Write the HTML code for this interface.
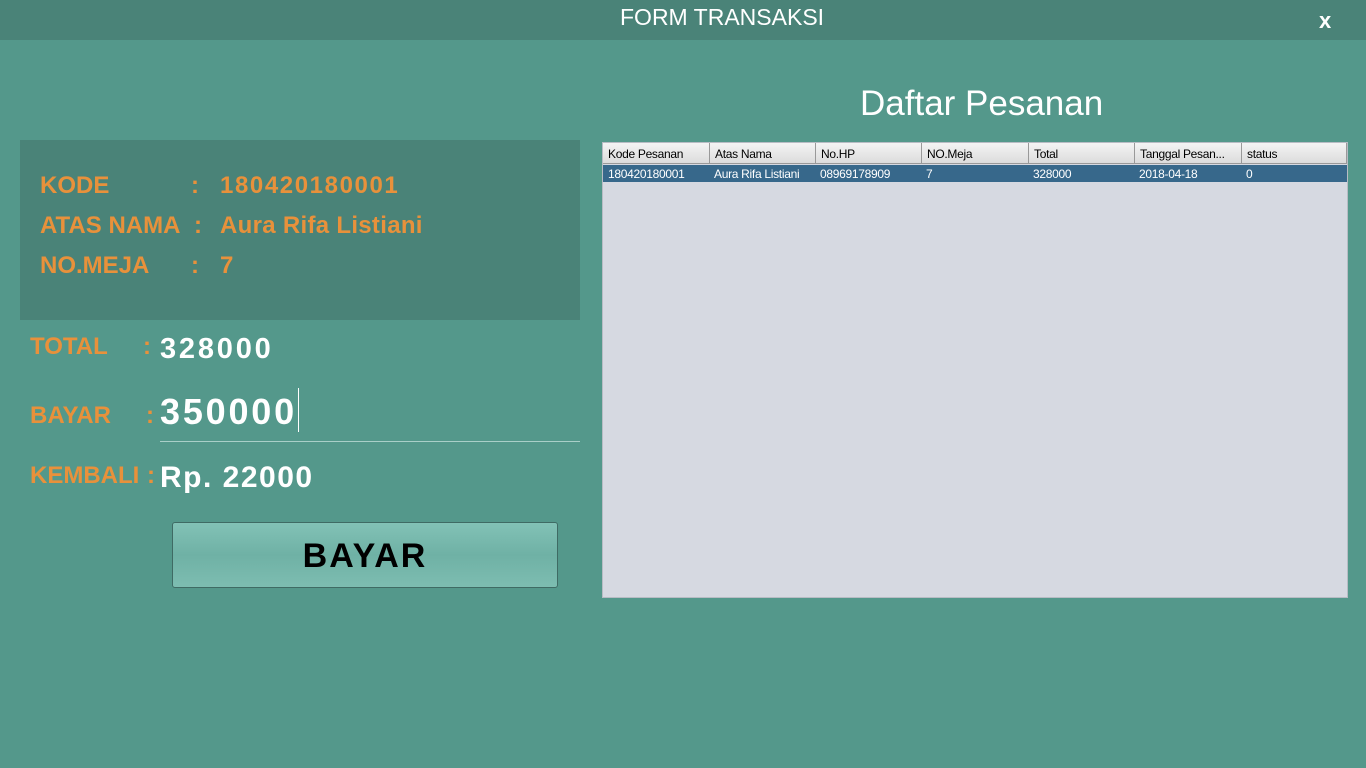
<!DOCTYPE html>
<html><head><meta charset="utf-8"><style>
*{margin:0;padding:0;box-sizing:border-box}
body{width:1366px;height:768px;background:#54988b;position:relative;overflow:hidden;font-family:"Liberation Sans",sans-serif}
.hdr{position:absolute;left:0;top:0;width:1366px;height:40px;background:#4a8378}
.t{position:absolute;white-space:nowrap}
.or{color:#e8913b;font-weight:bold;font-size:24px}
.wh{color:#fff;font-weight:bold}
.panel{position:absolute;left:20px;top:140px;width:560px;height:180px;background:#4a8378}
.tbl{position:absolute;left:602px;top:142px;width:746px;height:456px;background:#d6d9e1;border:1px solid #b8bcc4}
.th{position:absolute;top:0;height:21px;background:linear-gradient(#f4f4f4,#dcdcdc);border-right:1px solid #999;border-bottom:1px solid #999;font-size:12px;color:#000;padding:4px 0 0 5px;letter-spacing:-0.3px}
.row{position:absolute;left:0;top:22px;width:744px;height:17px;background:#37688b}
.td{position:absolute;top:2px;font-size:12px;color:#fff;letter-spacing:-0.3px}
.btn{position:absolute;left:172px;top:522px;width:386px;height:66px;border:1px solid #3f6b64;border-radius:3px;background:linear-gradient(#82c2b6,#6fb1a5 50%,#7dbdb1);text-align:center;font-size:34px;font-weight:bold;letter-spacing:2px;line-height:66px;color:#000}
</style></head><body>
<div class="hdr"></div>
<div class="t" style="left:620px;top:4px;color:#fff;font-size:23px">FORM TRANSAKSI</div>
<div class="t wh" style="left:1319px;top:8px;font-size:22px">x</div>
<div class="t" style="left:860px;top:84px;color:#fff;font-size:35px">Daftar Pesanan</div>
<div class="panel"></div>
<div class="t or" style="left:40px;top:172px">KODE</div>
<div class="t or" style="left:191px;top:172px">:</div>
<div class="t or" style="left:220px;top:172px;letter-spacing:1.6px">180420180001</div>
<div class="t or" style="left:40px;top:212px">ATAS NAMA</div>
<div class="t or" style="left:194px;top:212px">:</div>
<div class="t or" style="left:220px;top:212px;letter-spacing:0.3px">Aura Rifa Listiani</div>
<div class="t or" style="left:40px;top:252px">NO.MEJA</div>
<div class="t or" style="left:191px;top:252px">:</div>
<div class="t or" style="left:220px;top:252px">7</div>
<div class="t or" style="left:30px;top:333px">TOTAL</div>
<div class="t or" style="left:143px;top:333px">:</div>
<div class="t wh" style="left:160px;top:333px;font-size:29px;letter-spacing:2.8px">328000</div>
<div class="t or" style="left:30px;top:402px">BAYAR</div>
<div class="t or" style="left:146px;top:402px">:</div>
<div class="t wh" style="left:160px;top:391px;font-size:36px;letter-spacing:2.8px">350000</div>
<div style="position:absolute;left:298px;top:388px;width:1px;height:44px;background:#fff"></div>
<div style="position:absolute;left:160px;top:441px;width:420px;height:1px;background:#a9cfc8"></div>
<div class="t or" style="left:30px;top:462px">KEMBALI</div>
<div class="t or" style="left:147px;top:462px">:</div>
<div class="t wh" style="left:160px;top:461px;font-size:30px;letter-spacing:1.5px">Rp. 22000</div>
<div class="btn">BAYAR</div>
<div class="tbl">
<div class="th" style="left:0;width:107px">Kode Pesanan</div>
<div class="th" style="left:107px;width:106px">Atas Nama</div>
<div class="th" style="left:213px;width:106px">No.HP</div>
<div class="th" style="left:319px;width:107px">NO.Meja</div>
<div class="th" style="left:426px;width:106px">Total</div>
<div class="th" style="left:532px;width:107px">Tanggal Pesan...</div>
<div class="th" style="left:639px;width:105px">status</div>
<div class="row">
<div class="td" style="left:5px">180420180001</div>
<div class="td" style="left:111px">Aura Rifa Listiani</div>
<div class="td" style="left:217px">08969178909</div>
<div class="td" style="left:323px">7</div>
<div class="td" style="left:430px">328000</div>
<div class="td" style="left:536px">2018-04-18</div>
<div class="td" style="left:643px">0</div>
</div>
</div>
</body></html>
